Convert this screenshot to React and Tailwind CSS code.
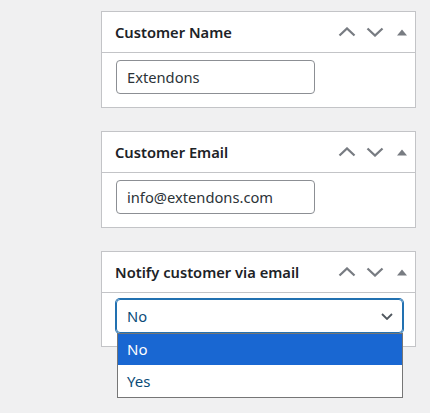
import React from "react";

const font = { fontFamily: '"Noto Sans", "Open Sans", sans-serif' };

function Chevron({ down }) {
  return (
    <svg width="18" height="10" viewBox="0 0 18 10" className="block">
      <polyline
        points={down ? "1.5,1.5 9,8.5 16.5,1.5" : "1.5,8.5 9,1.5 16.5,8.5"}
        fill="none"
        stroke="#787c82"
        strokeWidth="2.3"
      />
    </svg>
  );
}

function PanelHeader({ title }) {
  return (
    <div className="h-[41px] flex items-center justify-between border-b border-[#c3c4c7]">
      <h2 className="pl-[13px] text-[14.7px] font-semibold text-[#1d2327]">{title}</h2>
      <div className="flex items-center h-full">
        <button className="w-7 h-full flex items-center justify-center"><Chevron /></button>
        <button className="w-7 h-full flex items-center justify-center"><Chevron down /></button>
        <button className="w-[26px] h-full flex items-center justify-center">
          <svg width="10" height="7" viewBox="0 0 10 7" className="block">
            <polygon points="0,6.5 5,0.5 10,6.5" fill="#787c82" />
          </svg>
        </button>
      </div>
    </div>
  );
}

function Panel({ title, children }) {
  return (
    <div className="w-[315px] bg-white border border-[#c3c4c7]">
      <PanelHeader title={title} />
      {children}
    </div>
  );
}

export default function App() {
  return (
    <div className="min-h-[413px] bg-[#f0f0f1] pl-[101px] pt-[11px]" style={font}>
      <div className="flex flex-col gap-[23px]">
        <Panel title="Customer Name">
          <div className="pl-[14px] pt-[7px] pb-[13px]">
            <input
              readOnly
              value="Extendons"
              className="w-[199px] h-[34px] px-[10px] rounded-[4px] border border-[#8c8f94] text-[14.7px] text-[#2c3338] outline-none"
            />
          </div>
        </Panel>
        <Panel title="Customer Email">
          <div className="pl-[14px] pt-[7px] pb-[13px]">
            <input
              readOnly
              value="info@extendons.com"
              className="w-[199px] h-[34px] px-[10px] rounded-[4px] border border-[#8c8f94] text-[14.7px] text-[#2c3338] outline-none"
            />
          </div>
        </Panel>
        <Panel title="Notify customer via email">
          <div className="relative pl-[14px] pt-[6px] pb-[13px]">
            <div className="w-[287px] h-[34px] rounded-[4px] border border-[#2271b1] shadow-[0_0_0_1px_#2271b1] flex items-center justify-between pl-[10px] pr-[9px] text-[14.7px] text-[#0a4b78]">
              <span>No</span>
              <svg width="12" height="7" viewBox="0 0 12 7" className="block">
                <polyline points="1,1 6,6 11,1" fill="none" stroke="#50575e" strokeWidth="1.8" />
              </svg>
            </div>
            <ul className="absolute left-[15px] top-[40px] w-[286px] bg-white border border-[#767676] text-[15px] z-10">
              <li className="h-[31px] flex items-center pl-[9px] bg-[#1967d2] text-white">No</li>
              <li className="h-[32px] flex items-center pl-[9px] text-[#0a4b78]">Yes</li>
            </ul>
          </div>
        </Panel>
      </div>
    </div>
  );
}
